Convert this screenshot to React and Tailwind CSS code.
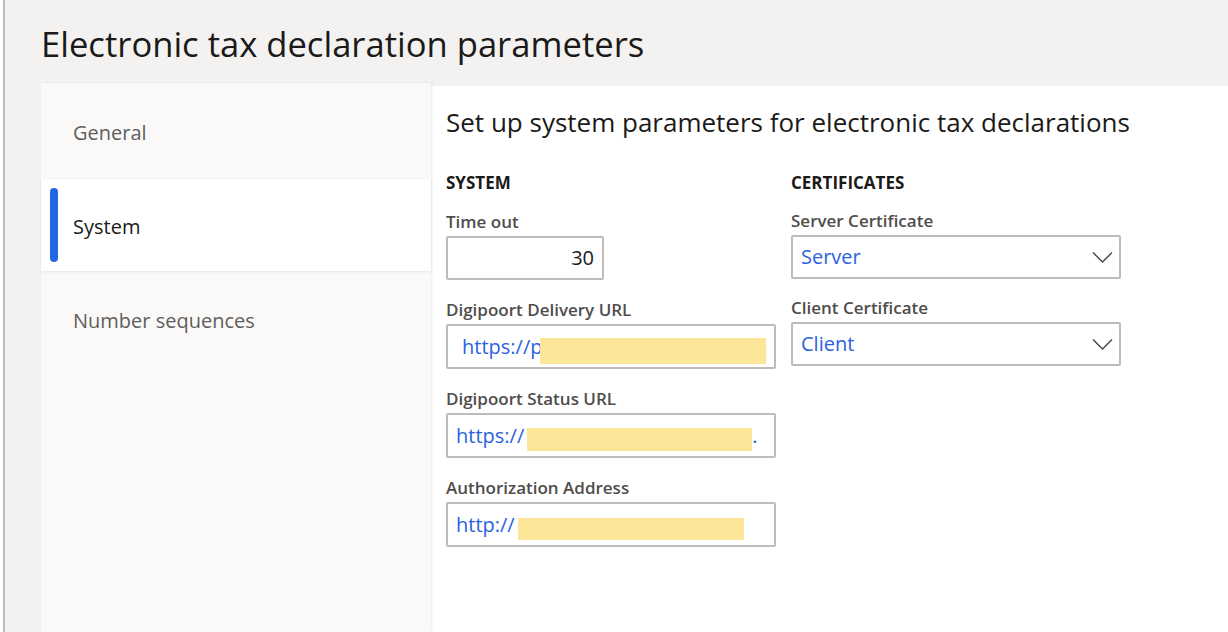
import React from "react";

const font = { fontFamily: '"Open Sans", "Noto Sans", sans-serif' };

const Label = ({ children }) => (
    <div className="text-[17px] font-semibold text-[#4f4d4b] leading-[20px] mb-[4px]">
        {children}
    </div>
);

const Masked = ({ prefix, pad, mask, tail }) => (
    <div className={"flex items-center h-full " + pad}>
        <span className="text-[#2a62e0]">{prefix}</span>
        <span className={"bg-[#fee699] " + mask}></span>
        {tail && <span className="text-[#2a62e0]">{tail}</span>}
    </div>
);

const Chevron = () => (
    <svg width="21" height="12" viewBox="0 0 21 12" fill="none">
        <path d="M1 1.5 L10.5 11 L20 1.5" stroke="#4f4d4b" strokeWidth="1.5" />
    </svg>
);

const Select = ({ value }) => (
    <div className="w-[330px] h-[44px] border-2 border-[#bebbb8] rounded-[2px] bg-white flex items-center justify-between pl-[8px] pr-[6px]">
        <span className="text-[20px] text-[#2a62e0]">{value}</span>
        <Chevron />
    </div>
);

export default function App() {
    return (
        <div
            className="w-[1228px] h-[632px] overflow-hidden bg-[#f3f2f1] border-l-2 border-[#bebbb8] ml-[3px] flex flex-col"
            style={font}
        >
            <h1 className="text-[34.6px] leading-[40px] text-[#1b1a19] pl-[36px] pt-[24px] h-[83px]">
                Electronic tax declaration parameters
            </h1>
            <div className="flex flex-1 pl-[36px]">
                <nav className="w-[390px] bg-[#faf9f8] flex flex-col shadow-[1px_0_2px_rgba(0,0,0,0.08)] z-10">
                    <div className="h-[96px] flex items-center pl-[32px] pt-[3px] text-[20px] text-[#605e5c]">
                        General
                    </div>
                    <div className="h-[92px] bg-white flex items-center relative pl-[32px] pt-[3px] text-[20px] text-[#1b1a19] shadow-[0_1px_3px_rgba(0,0,0,0.08)]">
                        <span className="absolute left-[9px] top-[9px] bottom-[9px] w-[8px] rounded-[4px] bg-[#2266e3]"></span>
                        System
                    </div>
                    <div className="h-[96px] flex items-center pl-[32px] pt-[3px] text-[20px] text-[#605e5c]">
                        Number sequences
                    </div>
                </nav>
                <main className="flex-1 bg-white mt-[3px] pl-[15px] pt-[20px]">
                    <h2 className="text-[26px] leading-[32px] text-[#1b1a19]">
                        Set up system parameters for electronic tax declarations
                    </h2>
                    <div className="flex gap-[15px] mt-[35px]">
                        <section className="w-[330px] flex flex-col">
                            <div className="text-[17px] font-bold text-[#1b1a19] leading-[20px] mb-[19px]">
                                SYSTEM
                            </div>
                            <Label>Time out</Label>
                            <div className="w-[158px] h-[44px] border-2 border-[#bebbb8] rounded-[2px] flex items-center justify-end pr-[8px] text-[20px] text-[#1b1a19] mb-[20px]">
                                30
                            </div>
                            <Label>Digipoort Delivery URL</Label>
                            <div className="w-[330px] h-[45px] border-2 border-[#bebbb8] rounded-[2px] text-[20px] mb-[20px]">
                                <Masked prefix="https://p" pad="pl-[14px]" mask="w-[226px] h-[26px] mt-[8px] -ml-[2px]" />
                            </div>
                            <Label>Digipoort Status URL</Label>
                            <div className="w-[330px] h-[45px] border-2 border-[#bebbb8] rounded-[2px] text-[20px] mb-[20px]">
                                <Masked prefix="https://" pad="pl-[8px]" mask="w-[225px] h-[23px] mt-[8px] ml-[3px]" tail="." />
                            </div>
                            <Label>Authorization Address</Label>
                            <div className="w-[330px] h-[45px] border-2 border-[#bebbb8] rounded-[2px] text-[20px]">
                                <Masked prefix="http://" pad="pl-[8px]" mask="w-[226px] h-[22px] mt-[8px] ml-[3px]" />
                            </div>
                        </section>
                        <section className="w-[330px] flex flex-col">
                            <div className="text-[17px] font-bold text-[#1b1a19] leading-[20px] mb-[18px]">
                                CERTIFICATES
                            </div>
                            <Label>Server Certificate</Label>
                            <div className="mb-[19px]">
                                <Select value="Server" />
                            </div>
                            <Label>Client Certificate</Label>
                            <Select value="Client" />
                        </section>
                    </div>
                </main>
            </div>
        </div>
    );
}
